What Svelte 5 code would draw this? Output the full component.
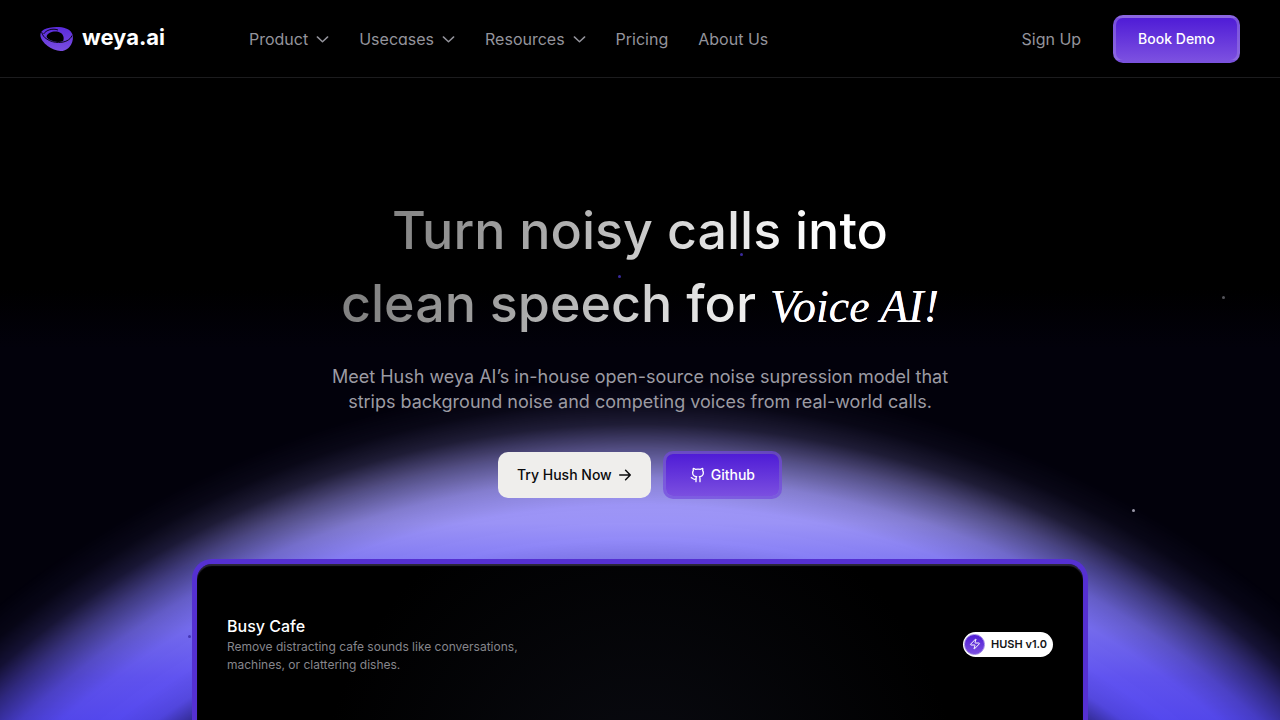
<script>
  const navItems = [
    { label: "Product", menu: true },
    { label: "Usecases", menu: true },
    { label: "Resources", menu: true },
    { label: "Pricing", menu: false },
    { label: "About Us", menu: false },
  ];

  // Positions are percentages of the hero area.
  const stars = [
    { x: 48.3, y: 30.7, color: "#3a2a9c" },
    { x: 57.8, y: 27.3, color: "#3a2a9c" },
    { x: 95.5, y: 34, color: "#55555c" },
    { x: 88.4, y: 67.1, color: "#9a98a8" },
    { x: 14.7, y: 86.7, color: "#4436b4" },
  ];

  const demo = {
    title: "Busy Cafe",
    description:
      "Remove distracting cafe sounds like conversations, machines, or clattering dishes.",
    badge: "HUSH v1.0",
  };
</script>

<div class="page">
  <header class="header">
    <a class="logo" href="/">
      <svg width="34" height="26" viewBox="0 0 34 26" aria-hidden="true">
        <defs>
          <linearGradient id="mark" x1="0" y1="0" x2="0" y2="1">
            <stop offset="0" stop-color="#5a2bdc" />
            <stop offset="1" stop-color="#7a4ee0" />
          </linearGradient>
        </defs>
        <path
          fill="url(#mark)"
          d="M4 3.600C9 .6 20 .2 26 2.400c5.500 2 7.600 6 6.800 11C31.800 20.400 26.500 25 20.500 25 12.500 25 1 17 .4 9.600.2 6.900 1.500 5 4 3.600Z"
        />
        <path
          d="M6.600 10.200C7.500 7 12.500 5 17 5.600c5 .7 8 5 6.200 9.400-3 1.300-6.500 1.300-9.700.2C10 14 6.400 12.600 6.600 10.200Z"
        />
        <path
          d="M1.600 6C2.500 9 4 11.500 7 13.200c3.500 2.200 7.500 3.300 11.500 3.300 6.500 0 11.800-2.500 13.500-7M3.600 8C6 4 13 2 18 4"
          fill="none"
          stroke="#000"
          stroke-width="0.900"
        />
      </svg>
      <span>weya.ai</span>
    </a>

    <nav class="nav" aria-label="Main">
      {#each navItems as item (item.label)}
        {#if item.menu}
          <button class="nav-item" type="button" aria-haspopup="true">
            {item.label}
            <svg class="chevron" viewBox="0 0 12 12" aria-hidden="true">
              <path d="M1.200 4.500 6 9.100 10.800 4.500" />
            </svg>
          </button>
        {:else}
          <a class="nav-item" href="/">{item.label}</a>
        {/if}
      {/each}
    </nav>

    <div class="account">
      <a class="nav-item" href="/">Sign Up</a>
      <a class="btn primary" href="/">Book Demo</a>
    </div>
  </header>

  <main class="hero">
    <div class="glow" aria-hidden="true"></div>
    {#each stars as star}
      <i
        class="star"
        style={`left:${star.x}%; top:${star.y}%; background:${star.color};`}
      ></i>
    {/each}

    <h1>
      Turn noisy calls into<br />
      clean speech for <em>Voice AI!</em>
    </h1>
    <p class="lead">
      Meet Hush weya AI’s in-house open-source noise supression model that
      strips background noise and competing voices from real-world calls.
    </p>

    <div class="actions">
      <a class="btn light" href="/">
        Try Hush Now
        <svg class="arrow" viewBox="0 0 24 24" aria-hidden="true">
          <path d="M3 12h18M13 4l8 8-8 8" />
        </svg>
      </a>
      <a class="btn primary github" href="/">
        <svg class="icon" viewBox="0 0 24 24" aria-hidden="true">
          <path
            d="M15 22v-4a4.800 4.800 0 0 0-1-3.500c3 0 6-2 6-5.500.08-1.250-.27-2.480-1-3.500.28-1.150.28-2.350 0-3.500 0 0-1 0-3 1.500-2.640-.5-5.360-.5-8 0C6 2 5 2 5 2c-.3 1.150-.3 2.350 0 3.500A5.403 5.403 0 0 0 4 9c0 3.500 3 5.500 6 5.500-.39.490-.68 1.050-.85 1.650-.17.6-.22 1.230-.15 1.850v4"
          />
          <path d="M9 18c-4.510 2-5-2-7-2" />
        </svg>
        Github
      </a>
    </div>

    <section class="card">
      <div class="card-head">
        <div class="card-text">
          <h2>{demo.title}</h2>
          <p>{demo.description}</p>
        </div>
        <div class="badge">
          <span class="bolt">
            <svg viewBox="0 0 24 24" aria-hidden="true">
              <path
                d="M4 14a1 1 0 0 1-.78-1.630l9.900-10.200a.5.500 0 0 1 .86.460l-1.920 6.020A1 1 0 0 0 13 10h7a1 1 0 0 1 .78 1.630l-9.900 10.200a.5.500 0 0 1-.86-.460l1.920-6.020A1 1 0 0 0 11 14z"
              />
            </svg>
          </span>
          {demo.badge}
        </div>
      </div>
    </section>
  </main>
</div>

<style>
  :global(body) {
    margin: 0;
    background: #000;
  }

  .page {
    display: flex;
    flex-direction: column;
    min-height: 100vh;
    font-family: Inter, "Liberation Sans", sans-serif;
    color: #fff;
    background: #000;
  }

  a {
    color: inherit;
    text-decoration: none;
  }

  .header {
    display: flex;
    align-items: center;
    box-sizing: border-box;
    height: 78px;
    padding: 0 40px;
    border-bottom: 1px solid #1c1c1e;
  }

  .logo {
    display: flex;
    align-items: center;
    gap: 8px;
    font-size: 22px;
    font-weight: 700;
    line-height: 28px;
  }

  .logo span {
    padding-bottom: 3px;
  }

  .nav {
    display: flex;
    gap: 30px;
    margin-left: 84px;
  }

  .nav-item {
    display: flex;
    align-items: center;
    gap: 8px;
    padding: 0;
    border: 0;
    background: none;
    color: #94949c;
    font: inherit;
    font-size: 16px;
    line-height: 24px;
    white-space: nowrap;
    cursor: pointer;
  }

  .nav button {
    font-feature-settings: "cv11";
  }

  .chevron {
    width: 13px;
    height: 13px;
    fill: none;
    stroke: currentColor;
    stroke-width: 1.3;
    stroke-linecap: round;
    stroke-linejoin: round;
  }

  .account {
    display: flex;
    align-items: center;
    gap: 32px;
    margin-left: auto;
  }

  .btn {
    display: flex;
    align-items: center;
    box-sizing: border-box;
    font-size: 14px;
    font-weight: 500;
    line-height: 20px;
    border-radius: 10px;
    white-space: nowrap;
  }

  .btn.primary {
    height: 48px;
    padding: 0 22px;
    border: 3px solid rgba(154, 124, 226, 0.55);
    background: linear-gradient(#4f1cd6, #7b4fe0);
  }

  .btn.light {
    gap: 6px;
    height: 46px;
    padding: 0 19px;
    background: #efeeec;
    color: #0b0b0d;
  }

  .btn.github {
    gap: 5px;
    padding: 0 24px;
    border-color: rgba(116, 72, 222, 0.7);
    background-clip: padding-box;
  }

  .arrow,
  .icon {
    width: 16px;
    height: 16px;
    fill: none;
    stroke: currentColor;
    stroke-linecap: round;
    stroke-linejoin: round;
  }

  .arrow {
    width: 14px;
    height: 14px;
    stroke-width: 2.6;
  }

  .icon {
    stroke-width: 2;
  }

  .hero {
    position: relative;
    display: flex;
    flex: 1;
    flex-direction: column;
    align-items: center;
    padding-top: 116px;
    overflow: hidden;
    isolation: isolate;
    background: linear-gradient(#000 210px, #02010b 270px);
  }

  .glow {
    position: absolute;
    inset: 0;
    z-index: -1;
    background: linear-gradient(
      #a39bfb 400px,
      #9d95fa 445px,
      #8078f4 490px,
      #766df1 550px,
      #6053f0 600px,
      #5246ee 650px
    );
    mask-image: radial-gradient(
      circle at 50% 1312px,
      rgba(0, 0, 0, 0.15) 740px,
      rgba(0, 0, 0, 0.45) 795px,
      rgba(0, 0, 0, 0.93) 826px,
      #000 850px,
      rgba(0, 0, 0, 0.98) 885px,
      rgba(0, 0, 0, 0.82) 912px,
      rgba(0, 0, 0, 0.5) 941px,
      rgba(0, 0, 0, 0.18) 966px,
      rgba(0, 0, 0, 0.05) 988px,
      transparent 1015px
    );
  }

  .star {
    position: absolute;
    z-index: -1;
    width: 3px;
    height: 3px;
    border-radius: 50%;
  }

  h1 {
    margin: 0;
    font-size: 52px;
    font-weight: 500;
    line-height: 73px;
    text-align: center;
    color: transparent;
    background: linear-gradient(
      105deg,
      #828282 8%,
      #a0a0a0 28%,
      #bababa 42%,
      #dedede 58%,
      #fff 78%
    );
    background-clip: text;
  }

  h1 em {
    font-family: "Liberation Serif", serif;
    font-size: 46px;
    font-weight: 400;
    line-height: 1;
    color: #fff;
  }

  .lead {
    max-width: 640px;
    margin: 24px 0 0;
    font-size: 18px;
    line-height: 25px;
    text-align: center;
    color: #9c9ba3;
  }

  .actions {
    display: flex;
    align-items: center;
    gap: 12px;
    margin-top: 37px;
  }

  .card {
    flex: 1;
    box-sizing: border-box;
    width: 70%;
    min-height: 160px;
    margin-top: 60px;
    border: 5px solid #5530d2;
    border-bottom: 0;
    border-radius: 20px 20px 0 0;
    background: radial-gradient(circle at 50% 240px, #0a0b12, #000 320px);
    box-shadow: inset 0 2px 1px #2b2838;
  }

  .card-head {
    display: flex;
    align-items: center;
    justify-content: space-between;
    padding: 50px 30px 30px;
  }

  .card-text {
    max-width: 320px;
  }

  h2 {
    margin: 0;
    font-size: 16px;
    font-weight: 500;
    line-height: 24px;
  }

  .card-text p {
    margin: 0;
    font-size: 12px;
    line-height: 18px;
    color: #86868c;
  }

  .badge {
    display: flex;
    align-items: center;
    gap: 6px;
    padding: 2px 6px 2px 1px;
    border-radius: 13px;
    background: #fff;
    color: #141416;
    font-size: 11px;
    font-weight: 600;
    line-height: 21px;
    white-space: nowrap;
  }

  .bolt {
    display: grid;
    place-items: center;
    width: 21px;
    height: 21px;
    border: 1px solid #9d82e6;
    box-sizing: border-box;
    border-radius: 50%;
    background: linear-gradient(#4f1cd6, #7b4fe0);
  }

  .bolt svg {
    width: 12px;
    height: 12px;
    fill: none;
    stroke: #fff;
    stroke-width: 2;
    stroke-linejoin: round;
  }
</style>
